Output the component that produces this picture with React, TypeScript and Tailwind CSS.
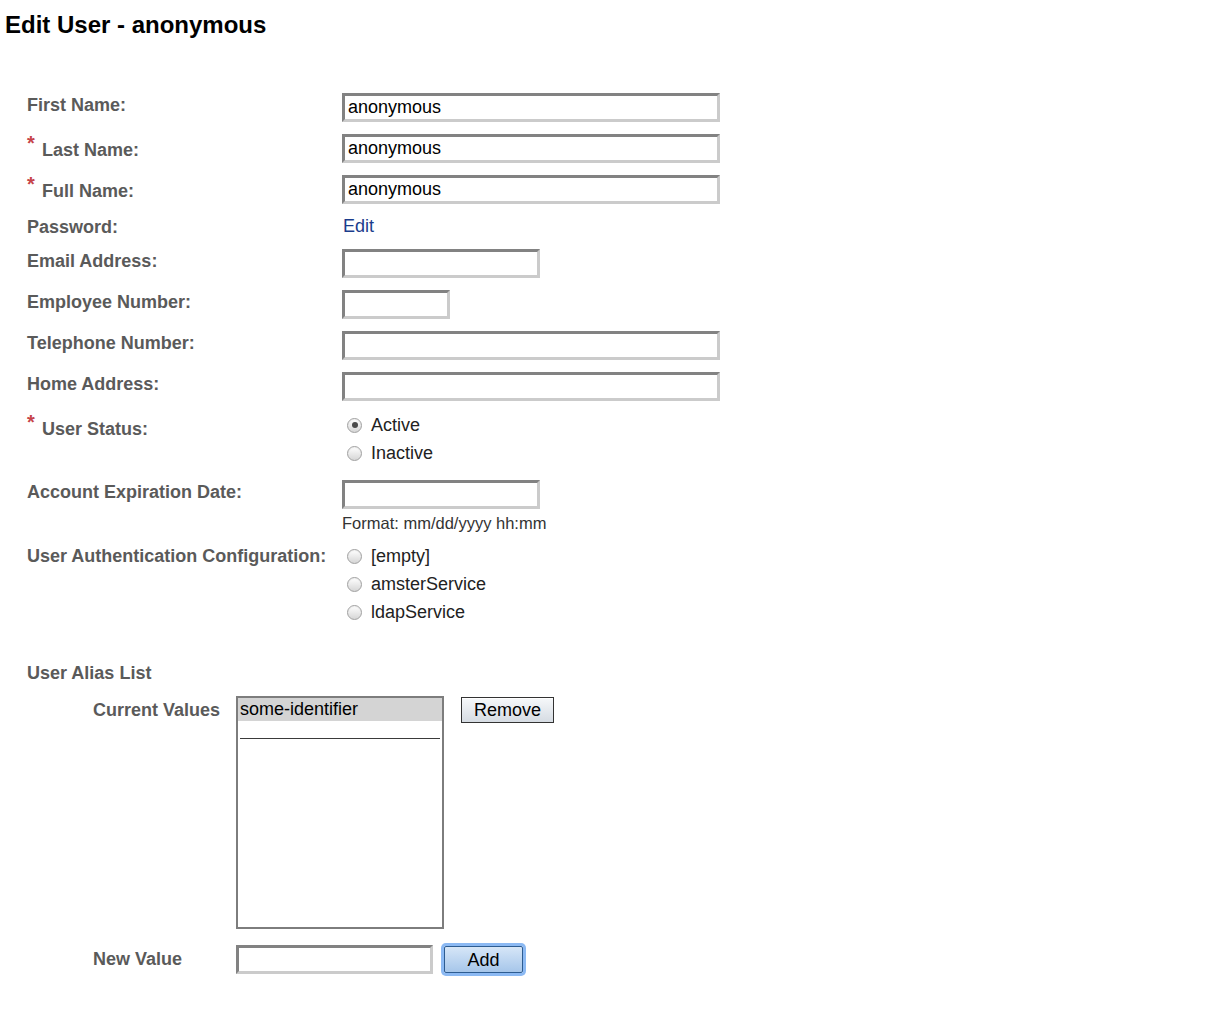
import React from "react";

const inputCls =
  "h-[29px] border-[3px] border-t-[#828282] border-l-[#828282] border-r-[#cbcbcb] border-b-[#cbcbcb] bg-white pl-[3px] text-[18px] text-black outline-none";

const Field = ({ width, value = "" }: { width: string; value?: string }) => (
  <input readOnly value={value} className={`${inputCls} ${width}`} />
);

const Label = ({
  children,
  required,
  className = "",
}: {
  children: React.ReactNode;
  required?: boolean;
  className?: string;
}) => (
  <div
    className={`flex w-[315px] shrink-0 items-start text-[18px] font-bold leading-[21px] text-[#5a5a5a] ${className}`}
  >
    {required && (
      <span className="relative -top-[7px] mr-[6px] w-[9px] text-[20px] font-bold leading-[21px] text-[#c6444a]">
        *
      </span>
    )}
    <span>{children}</span>
  </div>
);

const Radio = ({ label, checked }: { label: string; checked?: boolean }) => (
  <div className="flex h-[28px] items-center">
    <span className="ml-[5px] flex h-[15px] w-[15px] items-center justify-center rounded-full border border-[#a0a0a0] bg-linear-to-b from-white to-[#d6d6d6] shadow-[inset_0_1px_1px_rgba(0,0,0,0.06)]">
      {checked && <span className="h-[6px] w-[6px] rounded-full bg-[#4a4a4a]" />}
    </span>
    <span className="ml-[9px] text-[18px] leading-[21px] text-[#222]">{label}</span>
  </div>
);

export default function App() {
  return (
    <div className="min-h-[1009px] w-full bg-white font-['Liberation_Sans',Arial,sans-serif]">
      <h1 className="pl-[5px] pt-[11px] text-[24px] font-bold leading-[28px] text-black">
        Edit User - anonymous
      </h1>

      <div className="mt-[54px] flex flex-col pl-[27px]">
        <div className="flex items-start">
          <Label className="pt-[1.5px]">First Name:</Label>
          <Field width="w-[378px]" value="anonymous" />
        </div>
        <div className="mt-[12px] flex items-start">
          <Label required className="pt-[6px]">
            Last Name:
          </Label>
          <Field width="w-[378px]" value="anonymous" />
        </div>
        <div className="mt-[12px] flex items-start">
          <Label required className="pt-[6px]">
            Full Name:
          </Label>
          <Field width="w-[378px]" value="anonymous" />
        </div>
        <div className="mt-[12px] flex items-start">
          <Label className="pt-[1px]">Password:</Label>
          <a className="cursor-pointer pl-[1px] text-[18px] leading-[21px] text-[#1b3c8c]">Edit</a>
        </div>
        <div className="mt-[11px] flex items-start">
          <Label className="pt-[1.5px]">Email Address:</Label>
          <Field width="w-[198px]" />
        </div>
        <div className="mt-[12px] flex items-start">
          <Label className="pt-[1.5px]">Employee Number:</Label>
          <Field width="w-[108px]" />
        </div>
        <div className="mt-[12px] flex items-start">
          <Label className="pt-[1.5px]">Telephone Number:</Label>
          <Field width="w-[378px]" />
        </div>
        <div className="mt-[12px] flex items-start">
          <Label className="pt-[1.5px]">Home Address:</Label>
          <Field width="w-[378px]" />
        </div>
        <div className="mt-[10px] flex items-start">
          <Label required className="pt-[8px]">
            User Status:
          </Label>
          <div className="flex flex-col">
            <Radio label="Active" checked />
            <Radio label="Inactive" />
          </div>
        </div>
        <div className="mt-[13px] flex items-start">
          <Label className="pt-[1.5px]">Account Expiration Date:</Label>
          <div className="flex flex-col">
            <Field width="w-[198px]" />
            <div className="mt-[4px] text-[16.5px] leading-[20px] text-[#333]">
              Format: mm/dd/yyyy hh:mm
            </div>
          </div>
        </div>
        <div className="mt-[9px] flex items-start">
          <Label className="pt-[3.5px]">User Authentication Configuration:</Label>
          <div className="flex flex-col">
            <Radio label="[empty]" />
            <Radio label="amsterService" />
            <Radio label="ldapService" />
          </div>
        </div>

        <div className="mt-[37px] text-[18px] font-bold leading-[21px] text-[#5a5a5a]">
          User Alias List
        </div>

        <div className="mt-[12px] flex items-start pl-[66px]">
          <div className="w-[143px] shrink-0 pt-[4px] text-[18px] font-bold leading-[21px] text-[#5a5a5a]">
            Current Values
          </div>
          <div className="h-[233px] w-[208px] border-2 border-[#7d7d7d] bg-white">
            <div className="h-[23px] bg-[#d4d4d4] pl-[2px] text-[18px] leading-[22px] text-black">
              some-identifier
            </div>
            <div className="mx-[2px] h-[18px] border-b border-[#3a3a3a]" />
          </div>
          <button className="ml-[17px] mt-[1px] h-[26px] w-[93px] border-[1.5px] border-[#333] bg-linear-to-b from-[#f6f8fa] to-[#d6dce3] text-[18px] leading-[22px] text-black shadow-[inset_0_1px_0_#fff]">
            Remove
          </button>
        </div>

        <div className="mt-[16px] flex items-center pl-[66px]">
          <div className="w-[143px] shrink-0 text-[18px] font-bold leading-[21px] text-[#5a5a5a]">
            New Value
          </div>
          <Field width="w-[197px]" />
          <button className="ml-[11px] h-[27px] w-[79px] rounded-[2px] border-[1.5px] border-[#2d5c91] bg-linear-to-b from-[#d6e6f7] to-[#a6c6ea] text-[18px] leading-[22px] text-black shadow-[0_0_0_3px_rgba(110,168,240,0.8)]">
            Add
          </button>
        </div>
      </div>
    </div>
  );
}
